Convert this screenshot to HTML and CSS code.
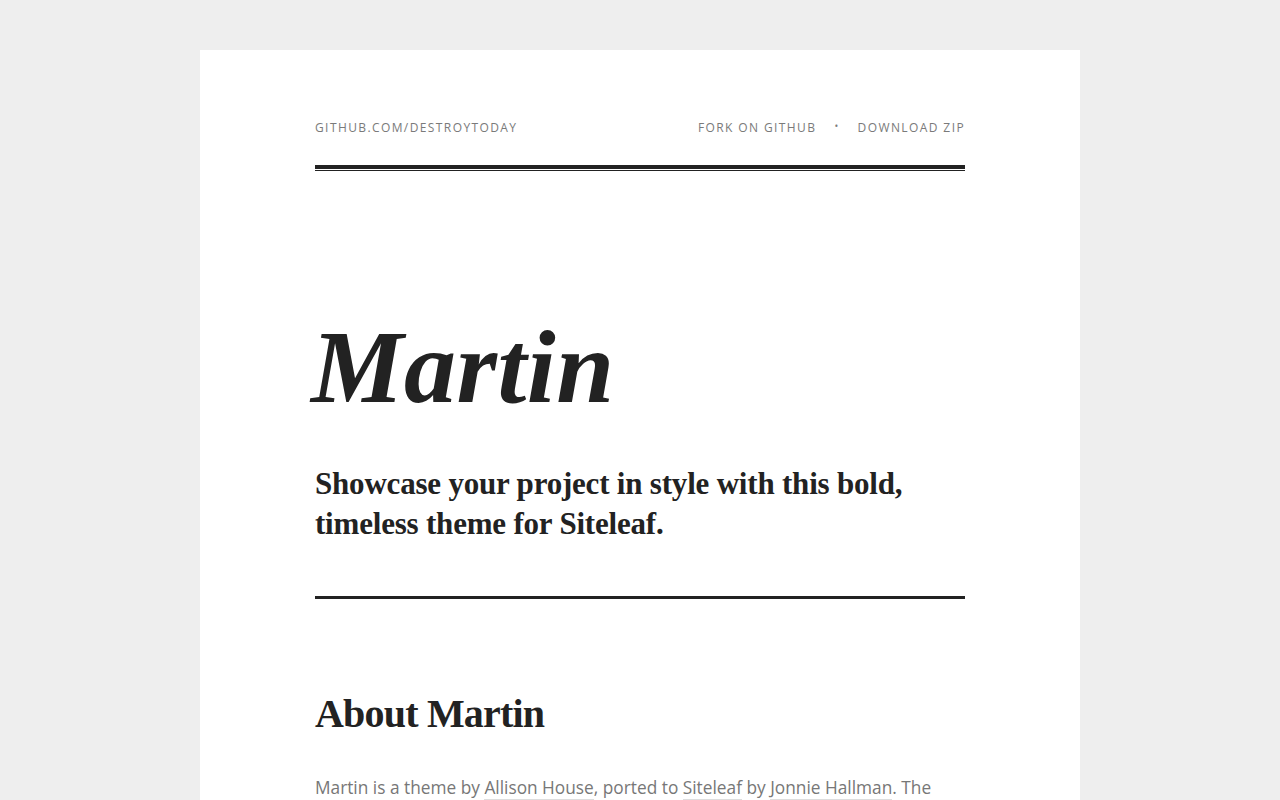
FILE: index.html
```html
<!DOCTYPE html>
<html lang="en">
<head>
<meta charset="utf-8">
<title>Martin</title>
<link rel="stylesheet" href="styles.css">
</head>
<body>
<div class="page">
  <header class="site-header">
    <nav class="nav">
      <a class="nav-link" href="#">github.com/destroytoday</a>
      <div class="nav-right">
        <a class="nav-link" href="#">Fork on GitHub</a>
        <span class="nav-dot">•</span>
        <a class="nav-link" href="#">Download ZIP</a>
      </div>
    </nav>
    <div class="rule-double"></div>
  </header>
  <section class="hero">
    <h1 class="title">Martin</h1>
    <p class="tagline">Showcase your project in style with this bold, timeless theme for Siteleaf.</p>
  </section>
  <div class="rule"></div>
  <section class="content">
    <h2 class="section-title">About Martin</h2>
    <p class="text">Martin is a theme by <a href="#">Allison House</a>, ported to <a href="#">Siteleaf</a> by <a href="#">Jonnie Hallman</a>. The theme is designed to showcase your project in a bold and timeless manner, with plenty of room for words.</p>
  </section>
</div>
</body>
</html>
```

FILE: styles.css
```css
html, body {
  margin: 0;
  padding: 0;
}
body {
  background: #eeeeee;
  font-family: "Open Sans", "Liberation Sans", sans-serif;
  color: #222;
}
.page {
  width: 880px;
  margin: 50px auto 0;
  background: #fff;
  padding: 67px 115px 60px;
  box-sizing: border-box;
  min-height: 900px;
}
.nav {
  display: flex;
  justify-content: space-between;
  align-items: center;
  font-size: 12px;
  line-height: 22px;
  letter-spacing: 1.4px;
  text-transform: uppercase;
}
.nav-link {
  color: #7a7a7a;
  text-decoration: none;
}
.nav-right {
  display: flex;
  align-items: center;
  gap: 18px;
}
.nav-dot {
  color: #7a7a7a;
  font-size: 10px;
  position: relative;
  top: -2px;
}
.rule-double {
  margin-top: 26px;
  height: 1px;
  border-top: 4px solid #222;
  border-bottom: 1px solid #222;
}
.hero {
  padding-top: 140px;
}
.title {
  margin: 0;
  font-family: "Liberation Serif", "DejaVu Serif", serif;
  font-style: italic;
  font-weight: 700;
  font-size: 104px;
  line-height: 112px;
  letter-spacing: 0.5px;
  color: #222;
  margin-left: -4px;
}
.tagline {
  margin: 41px 0 0;
  font-family: "Liberation Serif", "DejaVu Serif", serif;
  font-weight: 700;
  font-size: 31px;
  line-height: 40px;
  letter-spacing: -0.2px;
  color: #222;
}
.rule {
  margin-top: 52px;
  height: 3px;
  background: #222;
}
.content {
  padding-top: 91px;
}
.section-title {
  margin: 0;
  font-family: "Liberation Serif", "DejaVu Serif", serif;
  font-weight: 700;
  font-size: 40px;
  line-height: 48px;
  letter-spacing: -0.8px;
  color: #222;
}
.text {
  margin: 35px 0 0;
  font-size: 17.3px;
  line-height: 30px;
  color: #777;
}
.text a {
  color: #777;
  text-decoration: none;
  border-bottom: 1px solid #ddd;
}
```
